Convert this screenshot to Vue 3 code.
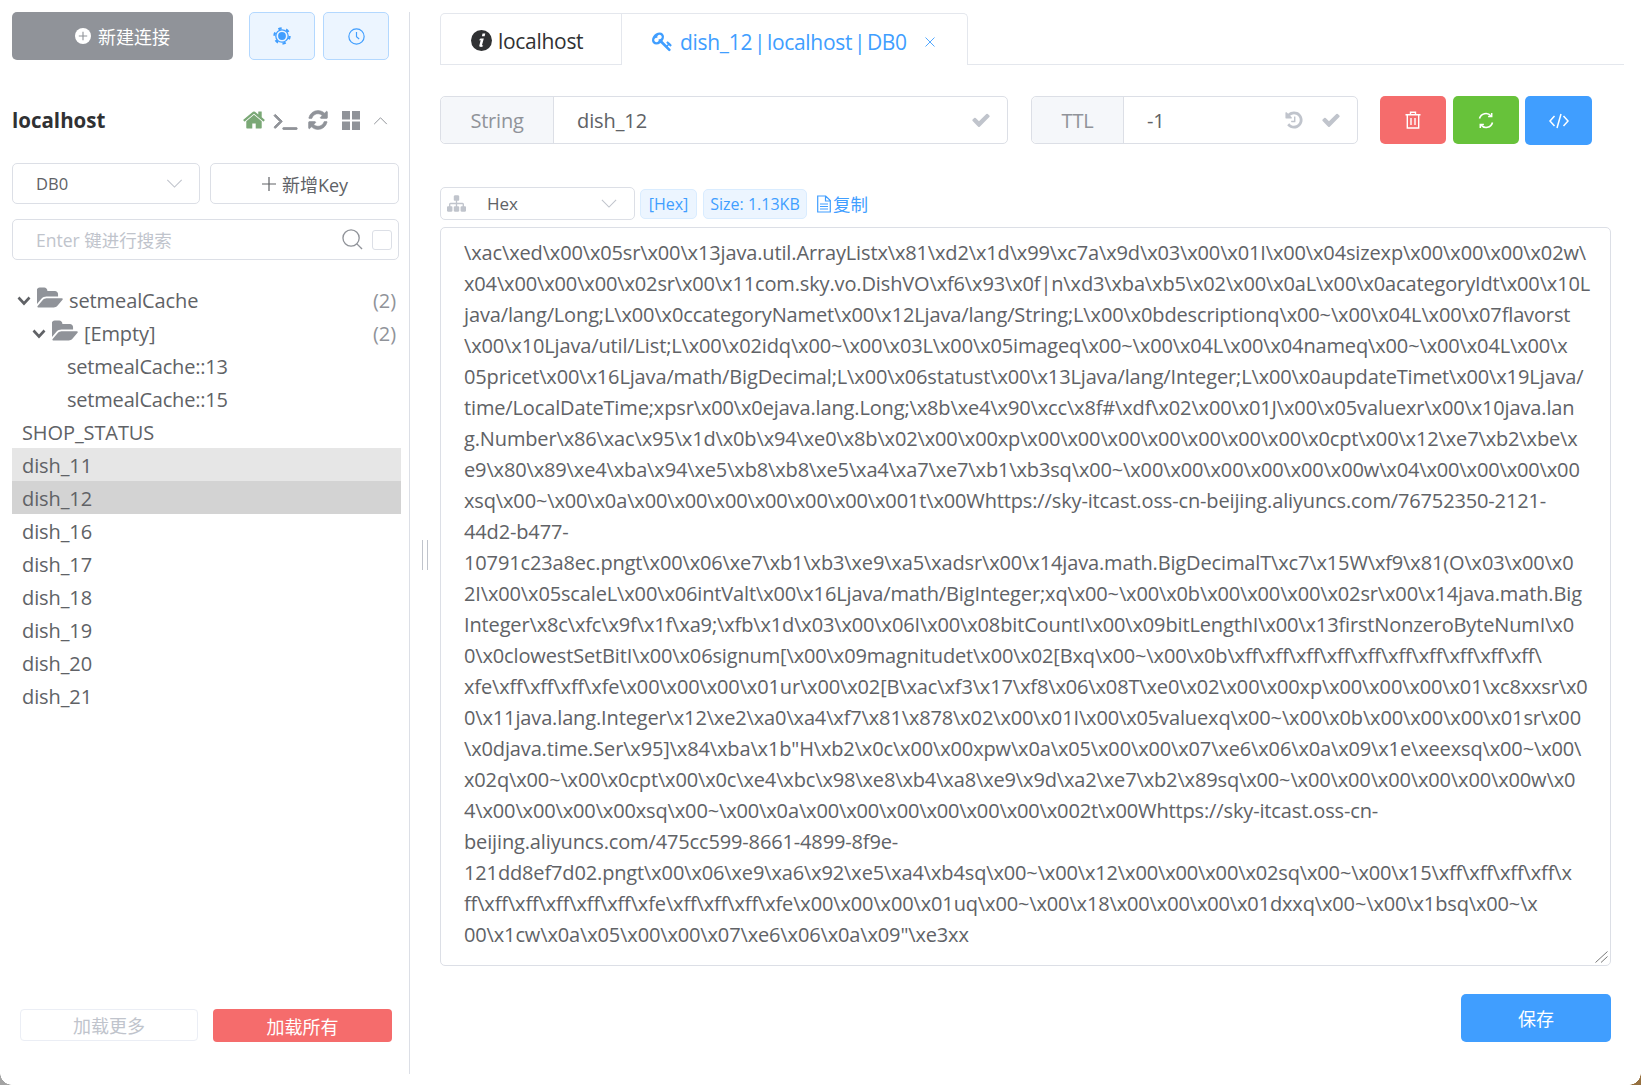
<script setup>
const raw = String.raw`\xac\xed\x00\x05sr\x00\x13java.util.ArrayListx\x81\xd2\x1d\x99\xc7a\x9d\x03\x00\x01I\x00\x04sizexp\x00\x00\x00\x02w\
x04\x00\x00\x00\x02sr\x00\x11com.sky.vo.DishVO\xf6\x93\x0f|n\xd3\xba\xb5\x02\x00\x0aL\x00\x0acategoryIdt\x00\x10L
java/lang/Long;L\x00\x0ccategoryNamet\x00\x12Ljava/lang/String;L\x00\x0bdescriptionq\x00~\x00\x04L\x00\x07flavorst
\x00\x10Ljava/util/List;L\x00\x02idq\x00~\x00\x03L\x00\x05imageq\x00~\x00\x04L\x00\x04nameq\x00~\x00\x04L\x00\x
05pricet\x00\x16Ljava/math/BigDecimal;L\x00\x06statust\x00\x13Ljava/lang/Integer;L\x00\x0aupdateTimet\x00\x19Ljava/
time/LocalDateTime;xpsr\x00\x0ejava.lang.Long;\x8b\xe4\x90\xcc\x8f#\xdf\x02\x00\x01J\x00\x05valuexr\x00\x10java.lan
g.Number\x86\xac\x95\x1d\x0b\x94\xe0\x8b\x02\x00\x00xp\x00\x00\x00\x00\x00\x00\x00\x0cpt\x00\x12\xe7\xb2\xbe\x
e9\x80\x89\xe4\xba\x94\xe5\xb8\xb8\xe5\xa4\xa7\xe7\xb1\xb3sq\x00~\x00\x00\x00\x00\x00\x00w\x04\x00\x00\x00\x00
xsq\x00~\x00\x0a\x00\x00\x00\x00\x00\x00\x001t\x00Whttps://sky-itcast.oss-cn-beijing.aliyuncs.com/76752350-2121-
44d2-b477-
10791c23a8ec.pngt\x00\x06\xe7\xb1\xb3\xe9\xa5\xadsr\x00\x14java.math.BigDecimalT\xc7\x15W\xf9\x81(O\x03\x00\x0
2I\x00\x05scaleL\x00\x06intValt\x00\x16Ljava/math/BigInteger;xq\x00~\x00\x0b\x00\x00\x00\x02sr\x00\x14java.math.Big
Integer\x8c\xfc\x9f\x1f\xa9;\xfb\x1d\x03\x00\x06I\x00\x08bitCountI\x00\x09bitLengthI\x00\x13firstNonzeroByteNumI\x0
0\x0clowestSetBitI\x00\x06signum[\x00\x09magnitudet\x00\x02[Bxq\x00~\x00\x0b\xff\xff\xff\xff\xff\xff\xff\xff\xff\xff\
xfe\xff\xff\xff\xfe\x00\x00\x00\x01ur\x00\x02[B\xac\xf3\x17\xf8\x06\x08T\xe0\x02\x00\x00xp\x00\x00\x00\x01\xc8xxsr\x0
0\x11java.lang.Integer\x12\xe2\xa0\xa4\xf7\x81\x878\x02\x00\x01I\x00\x05valuexq\x00~\x00\x0b\x00\x00\x00\x01sr\x00
\x0djava.time.Ser\x95]\x84\xba\x1b"H\xb2\x0c\x00\x00xpw\x0a\x05\x00\x00\x07\xe6\x06\x0a\x09\x1e\xeexsq\x00~\x00\
x02q\x00~\x00\x0cpt\x00\x0c\xe4\xbc\x98\xe8\xb4\xa8\xe9\x9d\xa2\xe7\xb2\x89sq\x00~\x00\x00\x00\x00\x00\x00w\x0
4\x00\x00\x00\x00xsq\x00~\x00\x0a\x00\x00\x00\x00\x00\x00\x002t\x00Whttps://sky-itcast.oss-cn-
beijing.aliyuncs.com/475cc599-8661-4899-8f9e-
121dd8ef7d02.pngt\x00\x06\xe9\xa6\x92\xe5\xa4\xb4sq\x00~\x00\x12\x00\x00\x00\x02sq\x00~\x00\x15\xff\xff\xff\xff\x
ff\xff\xff\xff\xff\xff\xfe\xff\xff\xff\xfe\x00\x00\x00\x01uq\x00~\x00\x18\x00\x00\x00\x01dxxq\x00~\x00\x1bsq\x00~\x
00\x1cw\x0a\x05\x00\x00\x07\xe6\x06\x0a\x09"\xe3xx`
const lines = raw.split('\n')
const keys = ['SHOP_STATUS', 'dish_11', 'dish_12', 'dish_16', 'dish_17', 'dish_18', 'dish_19', 'dish_20', 'dish_21']
const folder = 'M1845 931q0 35-53 93l-336 396q-43 51-120.5 86.5t-143.5 35.5h-1088q-34 0-60.5-13t-26.5-43q0-35 53-93l336-396q43-51 120.5-86.5t143.5-35.5h1088q34 0 60.5 13t26.5 43zm-343-344v160h-832q-94 0-197 47.5t-164 119.5l-337 396-5 6q0-4-.5-12.5t-.5-12.5v-960q0-92 66-158t158-66h320q92 0 158 66t66 158v32h544q92 0 158 66t66 158z'
const check = 'M1671 566q0 40-28 68l-724 724-136 136q-28 28-68 28t-68-28l-136-136-362-362q-28-28-28-68t28-68l136-136q28-28 68-28t68 28l294 295 656-657q28-28 68-28t68 28l136 136q28 28 28 68z'
const refresh = 'M1639 1056q0 5-1 7-64 268-268 434.5t-478 166.5q-146 0-282.5-55t-243.5-157l-129 129q-19 19-45 19t-45-19-19-45v-448q0-26 19-45t45-19h448q26 0 45 19t19 45-19 45l-137 137q71 66 161 102t187 36q134 0 250-65t186-179q11-17 53-117 8-23 30-23h192q13 0 22.5 9.5t9.5 22.5zm25-800v448q0 26-19 45t-45 19h-448q-26 0-45-19t-19-45 19-45l138-138q-148-137-349-137-134 0-250 65t-186 179q-11 17-53 117-8 23-30 23h-199q-13 0-22.5-9.5t-9.5-22.5v-7q65-268 270-434.5t480-166.5q146 0 284 55.5t245 156.5l130-129q19-19 45-19t45 19 19 45z'
</script>

<template>
  <div class="app">
    <aside class="side">
      <div class="top">
        <button class="btn-new">
          <svg class="ic-plus" viewBox="0 0 16 16"><circle cx="8" cy="8" r="8" fill="#fff"/><path d="M8 3.8v8.4M3.8 8h8.4" stroke="#909399" stroke-width="1.1"/></svg>
          新建连接
        </button>
        <button class="btn-soft">
          <svg width="18" height="18" viewBox="0 0 18 18" fill="none" stroke="#409eff"><circle cx="9" cy="9" r="6.2" stroke-width="1.3"/><circle cx="9" cy="9" r="7.6" stroke-width="2.2" stroke-dasharray="3.4 4.56"/><circle cx="9" cy="9" r="3.900" fill="#409eff" stroke="none"/></svg>
        </button>
        <button class="btn-soft btn-soft2">
          <svg width="17" height="17" viewBox="0 0 16 16" fill="none" stroke="#409eff" stroke-width="1.1"><circle cx="8" cy="8" r="7.2"/><path d="M8 3.8V8.3l2.5 2"/></svg>
        </button>
      </div>

      <div class="conn">
        <span class="conn-name">localhost</span>
        <span class="conn-tools">
          <svg class="home" viewBox="0 0 1792 1792"><path fill="#7aa876" d="M1472 992v480q0 26-19 45t-45 19h-384v-384h-256v384h-384q-26 0-45-19t-19-45v-480q0-1 .5-3t.5-3l575-474 575 474q1 2 1 6zm223-69l-62 74q-8 9-21 11h-3q-13 0-21-7l-692-577-692 577q-12 8-24 7-13-2-21-11l-62-74q-8-10-7-23.5t11-21.5l719-599q32-26 76-26t76 26l244 204v-195q0-14 9-23t23-9h192q14 0 23 9t9 23v408l219 182q10 8 11 21.5t-7 23.5z"/></svg>
          <svg class="term" viewBox="0 0 1792 1792"><path fill="#909399" stroke="#909399" stroke-width="70" d="M649 983l-466 466q-10 10-23 10t-23-10l-50-50q-10-10-10-23t10-23l393-393-393-393q-10-10-10-23t10-23l50-50q10-10 23-10t23 10l466 466q10 10 10 23t-10 23zm1079 457v64q0 14-9 23t-23 9h-960q-14 0-23-9t-9-23v-64q0-14 9-23t23-9h960q14 0 23 9t9 23z"/></svg>
          <svg class="rf" viewBox="0 0 1792 1792"><path fill="#909399" stroke="#909399" stroke-width="50" :d="refresh"/></svg>
          <svg class="grid" viewBox="0 0 18 19"><path fill="#909399" d="M0 0h8v8.500H0zM10 0h8v8.500h-8zM0 10.500h8V19H0zM10 10.500h8V19h-8z"/></svg>
          <svg class="up" viewBox="0 0 16 10" fill="none" stroke="#909399" stroke-width="1.1"><path d="M1 9l7-7 7 7"/></svg>
        </span>
      </div>

      <div class="ops">
        <div class="select">
          <span>DB0</span>
          <svg class="caret" viewBox="0 0 18 10" fill="none" stroke="#c0c4cc" stroke-width="1.2"><path d="M1 1l8 8 8-8"/></svg>
        </div>
        <button class="btn-key">
          <svg width="16" height="16" viewBox="0 0 16 16" stroke="#606266" stroke-width="1.2"><path d="M8 1v14M1 8h14"/></svg>
          新增Key
        </button>
      </div>

      <div class="search">
        <span class="ph">Enter 键进行搜索</span>
        <svg class="mag" viewBox="0 0 22 22" fill="none" stroke="#909399" stroke-width="1.4"><circle cx="9.5" cy="9.5" r="8.5"/><path d="M15.6 15.6L21 21"/></svg>
        <span class="cb"></span>
      </div>

      <div class="tree">
        <div class="row">
          <svg class="ang" viewBox="0 0 14 10" fill="none" stroke="#606266" stroke-width="2.6"><path d="M1.5 1.5L7 7.5l5.5-6"/></svg>
          <svg class="fold" viewBox="0 0 1920 1792"><path fill="#909399" :d="folder"/></svg>
          <span class="lab">setmealCache</span><span class="cnt">(2)</span>
        </div>
        <div class="row lv2">
          <svg class="ang" viewBox="0 0 14 10" fill="none" stroke="#606266" stroke-width="2.6"><path d="M1.5 1.5L7 7.5l5.5-6"/></svg>
          <svg class="fold" viewBox="0 0 1920 1792"><path fill="#909399" :d="folder"/></svg>
          <span class="lab">[Empty]</span><span class="cnt">(2)</span>
        </div>
        <div class="row leaf">setmealCache::13</div>
        <div class="row leaf">setmealCache::15</div>
        <div v-for="k in keys" :key="k" class="row key" :class="{ hov: k === 'dish_11', cur: k === 'dish_12' }">{{ k }}</div>
      </div>

      <div class="more">
        <button class="btn-more">加载更多</button>
        <button class="btn-all">加载所有</button>
      </div>
    </aside>

    <i class="handle"></i>

    <main class="main">
      <div class="tabs">
        <div class="tab-group">
          <div class="tab tab1">
            <svg class="info" viewBox="0 0 20 20"><circle cx="10" cy="10" r="10" fill="#303133"/><path fill="#fff" d="M11 3.4h2.6l-.6 2.5h-2.6zM9 8h3.2l-1.7 6.3c-.1.5.2.6.9.2l.2.8c-1.3 1-3.500 1.300-3.700-.3l1.300-5.300H7.600z"/></svg>
            localhost
          </div>
          <div class="tab tab2">
            <svg class="keyi" viewBox="0 0 1792 1792"><path fill="#409eff" d="M832 512q0-80-56-136t-136-56-136 56-56 136q0 42 19 83-41-19-83-19-80 0-136 56t-56 136 56 136 136 56 136-56 56-136q0-42-19-83 41 19 83 19 80 0 136-56t56-136zm851 704q0 17-49 66t-66 49q-9 0-28.500-16t-36.500-33-38.500-40-24.500-26l-96 96 220 220q28 28 28 68 0 42-39 81t-81 39q-40 0-68-28l-671-671q-176 131-365 131-163 0-265.500-102.500t-102.500-265.500q0-160 95-313t248-248 313-95q163 0 265.500 102.500t102.500 265.500q0 189-131 365l355 355 96-96q-3-3-26-24.500t-40-38.500-33-36.500-16-28.500q0-17 49-66t66-49q13 0 23 10 6 6 46 44.500t82 79.500 86.500 86 73 78 28.500 41z"/></svg>
            <span class="t2">dish_12 | localhost | DB0</span>
            <svg class="close" viewBox="0 0 10 10" stroke="#409eff" stroke-width=".9"><path d="M.5.500l9 9M9.500.500l-9 9"/></svg>
          </div>
        </div>
      </div>

      <div class="keybar">
        <div class="group g-key">
          <span class="pre pre-key">String</span>
          <span class="val">dish_12</span>
          <svg class="ok" viewBox="0 0 1792 1792"><path fill="#c0c4cc" :d="check"/></svg>
        </div>
        <div class="group g-ttl">
          <span class="pre pre-ttl">TTL</span>
          <span class="val">-1</span>
          <svg class="hist" viewBox="0 0 1792 1792"><path fill="#c0c4cc" d="M1664 896q0 156-61 298t-164 245-245 164-298 61q-172 0-327-72.500t-264-204.500q-7-10-6.500-22.500t8.500-20.500l137-138q10-9 25-9 16 2 23 12 73 95 179 147t225 52q104 0 198.500-40.500t163.500-109.500 109.500-163.500 40.500-198.500-40.500-198.500-109.500-163.500-163.500-109.500-198.500-40.500q-98 0-188 35.500t-160 101.500l137 138q31 30 14 69-17 40-59 40h-448q-26 0-45-19t-19-45v-448q0-42 40-59 39-17 69 14l130 129q107-101 244.500-156.500t284.500-55.500q156 0 298 61t245 164 164 245 61 298zm-640-288v448q0 14-9 23t-23 9h-320q-14 0-23-9t-9-23v-64q0-14 9-23t23-9h224v-352q0-14 9-23t23-9h64q14 0 23 9t9 23z"/></svg>
          <svg class="ok ok2" viewBox="0 0 1792 1792"><path fill="#c0c4cc" :d="check"/></svg>
        </div>
        <button class="act red">
          <svg width="16" height="18" viewBox="0 0 16 18" fill="none" stroke="#fff" stroke-width="1.4"><path d="M.5 3.800h15M5.500 3.500V1.200h5v2.300M2.300 4v13h11.400V4M6 7v7M10 7v7"/></svg>
        </button>
        <button class="act green">
          <svg width="16" height="17" viewBox="0 0 16 17" fill="none" stroke="#fff" stroke-width="1.600"><path d="M1.500 6.500A6.600 6.600 0 0 1 13 4M14.500 10.500A6.600 6.600 0 0 1 3 13"/><path d="M13.700 1v3.600h-3.600M2.300 16v-3.600h3.600" stroke-width="1.500"/></svg>
        </button>
        <button class="act blue">
          <svg width="20" height="16" viewBox="0 0 20 16" fill="none" stroke="#fff" stroke-width="1.500"><path d="M5.500 3L1 8l4.500 5M14.500 3L19 8l-4.500 5M12 1L8 15"/></svg>
        </button>
      </div>

      <div class="fmt">
        <div class="fmt-sel">
          <svg class="site" viewBox="0 0 1792 1792"><path fill="#c0c4cc" d="M1792 1248v320q0 40-28 68t-68 28h-320q-40 0-68-28t-28-68v-320q0-40 28-68t68-28h96v-192h-512v192h96q40 0 68 28t28 68v320q0 40-28 68t-68 28h-320q-40 0-68-28t-28-68v-320q0-40 28-68t68-28h96v-192h-512v192h96q40 0 68 28t28 68v320q0 40-28 68t-68 28h-320q-40 0-68-28t-28-68v-320q0-40 28-68t68-28h96v-192q0-52 38-90t90-38h512v-192h-96q-40 0-68-28t-28-68v-320q0-40 28-68t68-28h320q40 0 68 28t28 68v320q0 40-28 68t-68 28h-96v192h512q52 0 90 38t38 90v192h96q40 0 68 28t28 68z"/></svg>
          <span class="hex">Hex</span>
          <svg class="caret2" viewBox="0 0 18 10" fill="none" stroke="#c0c4cc" stroke-width="1.200"><path d="M1 1l8 8 8-8"/></svg>
        </div>
        <span class="tag tag1">[Hex]</span>
        <span class="tag tag2">Size: 1.13KB</span>
        <span class="copy">
          <svg width="14" height="18" viewBox="0 0 14 18" fill="none" stroke="#409eff" stroke-width="1.200"><path d="M.7 1h8l4.600 4.600V17H.7zM8.500 1v5h5M3 9h8M3 11.500h8M3 14h8"/></svg>
          复制
        </span>
      </div>

      <div class="area">
        <div v-for="(l, i) in lines" :key="i" class="ln">{{ l }}</div>
        <svg class="grip" viewBox="0 0 13 12" stroke="#555" stroke-width=".8" fill="none"><path d="M.5 11.500L12.500.500M6 11.500l6.500-6"/></svg>
      </div>

      <button class="save">保存</button>
    </main>

    <i class="corner cl"></i>
    <i class="corner cr"></i>
  </div>
</template>

<style>
html, body { margin: 0; background: #fff; }
</style>
<style scoped>
* { box-sizing: border-box; }
.app {
  position: relative; display: flex; width: 1641px; height: 1085px; overflow: hidden; background: #fff;
  font-family: "Open Sans", "Noto Sans CJK SC", sans-serif; color: #606266; font-size: 20px;
}
button { font-family: inherit; margin: 0; padding: 0; cursor: pointer; display: flex; align-items: center; justify-content: center; }
svg { flex: none; display: block; }

.side { width: 410px; height: 1062px; margin-top: 12px; border-right: 1px solid #dcdfe6; padding-left: 12px; display: flex; flex-direction: column; }
.top { display: flex; height: 48px; }
.btn-new { width: 221px; height: 48px; background: #909399; border: 0; border-radius: 5px; color: #fff; font-size: 18px; gap: 7px; }
.ic-plus { width: 16px; height: 16px; }
.btn-soft { width: 66px; height: 48px; margin-left: 16px; background: #ecf5ff; border: 1px solid #b3d8ff; border-radius: 5px; }
.btn-soft2 { margin-left: 8px; }

.conn { display: flex; align-items: center; height: 40px; margin-top: 40px; }
.conn-name { font-size: 20.5px; font-weight: 700; color: #303133; }
.conn-tools { display: flex; align-items: center; margin-left: auto; width: 167px; height: 22px; }
.home { width: 24px; height: 24px; }
.term { width: 25px; height: 25px; margin-left: 7px; }
.rf { width: 22px; height: 22px; margin-left: 9px; }
.grid { width: 18px; height: 19px; margin-left: 13px; }
.up { width: 15px; height: 9px; margin-left: 13px; }

.ops { display: flex; gap: 10px; margin-top: 23px; }
.select { width: 188px; height: 41px; border: 1px solid #dcdfe6; border-radius: 5px; display: flex; align-items: center; padding-left: 23px; font-size: 16.5px; }
.caret { width: 17px; height: 9px; margin-left: auto; margin-right: 16px; }
.btn-key { width: 189px; height: 41px; border: 1px solid #dcdfe6; border-radius: 5px; background: #fff; color: #606266; font-size: 18px; gap: 5px; }

.search { width: 387px; height: 41px; margin-top: 15px; border: 1px solid #dcdfe6; border-radius: 5px; display: flex; align-items: center; padding-left: 23px; }
.ph { color: #c0c4cc; font-size: 17.5px; }
.mag { width: 21px; height: 21px; margin-left: auto; }
.cb { width: 20px; height: 20px; border: 1px solid #dcdfe6; border-radius: 3px; margin: 0 6px 0 9px; }

.tree { width: 389px; margin-top: 23px; }
.row { height: 33px; display: flex; align-items: center; font-size: 20px; letter-spacing: -0.1px; line-height: 33px; padding: 2px 0 0 5px; white-space: nowrap; }
.lv2 { padding-left: 20px; }
.leaf { padding-left: 55px; letter-spacing: -0.2px; }
.key { padding-left: 10px; }
.hov { background: #e6e6e6; }
.cur { background: #d3d3d3; }
.ang { width: 14px; height: 10px; }
.fold { width: 27px; height: 25px; margin: 0 5px 0 6px; transform: translateY(-2px); }
.lab { flex: 1; }
.cnt { color: #909399; margin-right: 5px; }

.more { margin-top: auto; margin-bottom: 32px; margin-left: 8px; display: flex; gap: 15px; }
.btn-more { width: 178px; height: 32px; border: 1px solid #ebeef5; border-radius: 4px; background: #fff; color: #c0c4cc; font-size: 18px; }
.btn-all { width: 179px; height: 33px; border: 0; border-radius: 4px; background: #f56c6c; color: #fff; font-size: 18px; }

.handle { position: absolute; left: 422px; top: 540px; width: 6px; height: 30px; border-left: 1px solid #c0c4cc; border-right: 1px solid #c0c4cc; }

.main { width: 1214px; padding: 13px 0 0 30px; }
.tabs { height: 52px; width: 1184px; border-bottom: 1px solid #e4e7ed; }
.tab-group { display: flex; width: 528px; height: 52px; border: 1px solid #e4e7ed; border-bottom: 0; border-radius: 5px 5px 0 0; background: #fff; }
.tab { display: flex; align-items: center; font-size: 21px; letter-spacing: -0.3px; white-space: nowrap; padding-top: 3px; }
.tab1 { width: 181px; padding-left: 30px; border-right: 1px solid #e4e7ed; border-bottom: 1px solid #e4e7ed; height: 51px; color: #303133; }
.tab2 { flex: 1; height: 52px; padding-left: 30px; color: #409eff; }
.t2 { word-spacing: -3.4px; }
.info { width: 21px; height: 21px; margin-right: 6px; }
.keyi { width: 21px; height: 21px; margin-right: 7px; }
.close { width: 10px; height: 10px; margin-left: 18px; }

.keybar { display: flex; margin-top: 31px; height: 48px; align-items: flex-start; }
.group { display: flex; align-items: center; height: 48px; border: 1px solid #dcdfe6; border-radius: 5px; }
.g-key { width: 568px; }
.g-ttl { width: 327px; margin-left: 23px; }
.pre { height: 46px; background: #f5f7fa; border-right: 1px solid #dcdfe6; border-radius: 5px 0 0 5px; display: flex; align-items: center; justify-content: center; color: #909399; font-size: 20px; letter-spacing: -0.2px; }
.pre-key { width: 113px; }
.pre-ttl { width: 92px; }
.val { margin-left: 23px; letter-spacing: -0.1px; }
.ok { width: 20px; height: 20px; margin-left: auto; margin-right: 16px; }
.hist { width: 20px; height: 20px; margin-left: auto; }
.ok2 { margin-left: 17px; }
.act { height: 48px; width: 66px; border: 0; border-radius: 5px; }
.red { background: #f56c6c; margin-left: 22px; }
.green { background: #67c23a; margin-left: 7px; }
.blue { background: #409eff; margin-left: 6px; width: 67px; height: 49px; }

.fmt { display: flex; align-items: center; margin-top: 43px; height: 33px; }
.fmt-sel { width: 195px; height: 33px; border: 1px solid #dcdfe6; border-radius: 5px; display: flex; align-items: center; padding-left: 6px; }
.site { width: 19px; height: 19px; }
.hex { margin-left: 21px; font-size: 17px; }
.caret2 { width: 16px; height: 9px; margin-left: auto; margin-right: 17px; }
.tag { height: 30px; display: flex; align-items: center; justify-content: center; background: #ecf5ff; border: 1px solid #d9ecff; border-radius: 5px; color: #409eff; font-size: 16px; }
.tag1 { width: 57px; margin-left: 5px; }
.tag2 { width: 104px; margin-left: 6px; }
.copy { display: flex; align-items: center; gap: 2px; margin-left: 10px; color: #409eff; font-size: 17.5px; }

.area { position: relative; width: 1171px; height: 739px; margin-top: 7px; border: 1px solid #dcdfe6; border-radius: 5px; padding: 9px 0 0 23px; overflow: hidden; }
.ln { height: 31px; line-height: 31px; font-size: 20px; white-space: pre; letter-spacing: -0.14px; }
.grip { position: absolute; right: 2px; bottom: 2px; width: 13px; height: 12px; }

.save { width: 150px; height: 48px; margin: 28px 0 0 1021px; border: 0; border-radius: 5px; background: #409eff; color: #fff; font-size: 18px; }

.corner { position: absolute; bottom: 0; width: 12px; height: 12px; }
.cl { left: 0; background: radial-gradient(circle at 100% 0, transparent 11.5px, #a3a3a3 12px); }
.cr { right: 0; background: radial-gradient(circle at 0 0, transparent 11.5px, #96703f 12px); }
</style>
